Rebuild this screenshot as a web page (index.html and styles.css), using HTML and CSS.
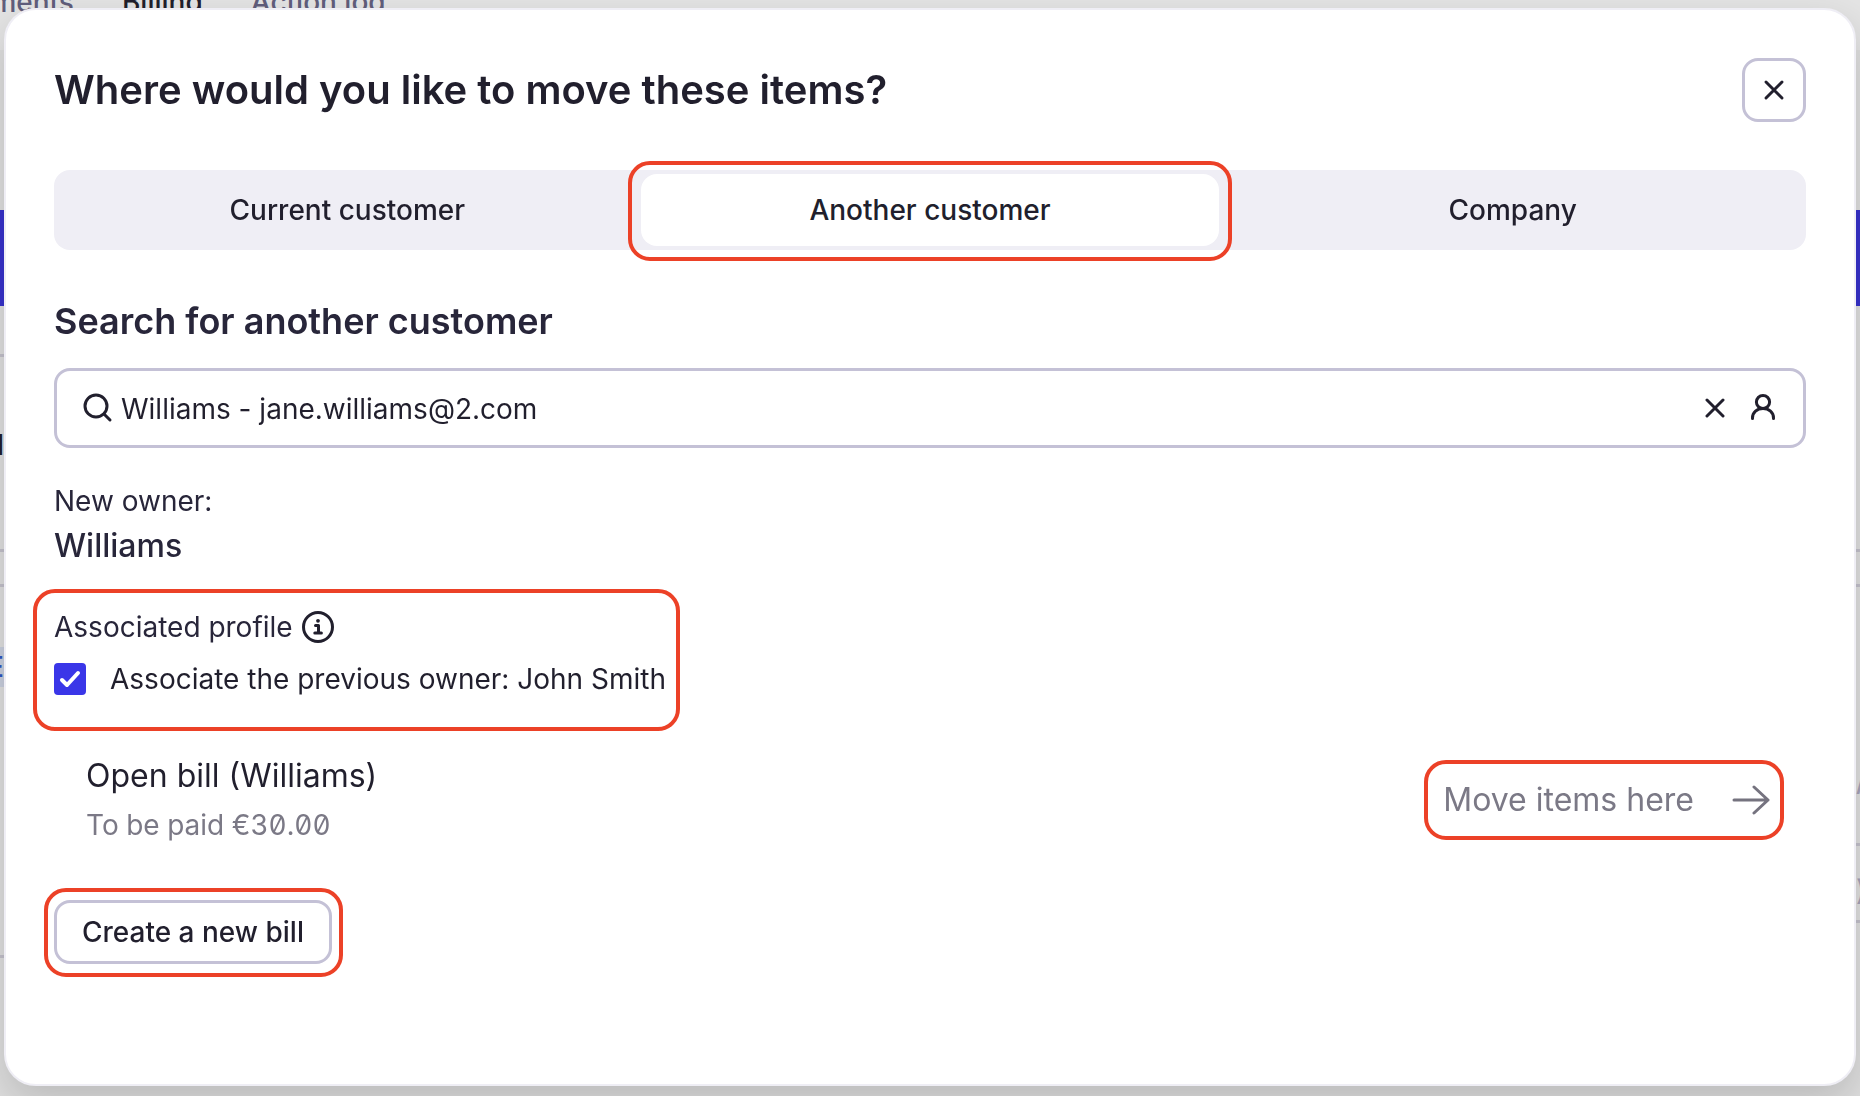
FILE: index.html
```html
<!DOCTYPE html>
<html lang="en">
<head>
<meta charset="utf-8">
<title>Move items</title>
<link rel="stylesheet" href="styles.css">
</head>
<body>
<div class="page" aria-hidden="true">
  <nav class="page-nav">
    <span>Payments</span>
    <span class="current">Billing</span>
    <span>Action log</span>
  </nav>
  <div class="page-gap"></div>
  <div class="page-bar"></div>
  <div class="page-body">
    <div class="page-column">
      <div class="page-row row-intro"></div>
      <div class="page-row row-name"><span>Paid</span></div>
      <div class="page-row row-thin"></div>
      <div class="page-row row-link"><span>E</span></div>
    </div>
    <div class="page-column">
      <div class="page-row row-top"></div>
      <div class="page-row row-thin"></div>
      <div class="page-row row-muted"><span>/</span></div>
      <div class="page-row row-short"><span>)</span></div>
    </div>
  </div>
</div>

<main class="dialog" role="dialog" aria-labelledby="dialog-title">
  <header class="dialog-header">
    <h1 id="dialog-title">Where would you like to move these items?</h1>
    <button class="close" type="button" aria-label="Close">
      <svg class="icon" viewBox="0 0 32 32"><path d="M8 8l16 16M24 8L8 24"/></svg>
    </button>
  </header>

  <div class="tabs" role="tablist">
    <button class="tab" type="button" role="tab">Current customer</button>
    <button class="tab active marked" type="button" role="tab" aria-selected="true">Another customer</button>
    <button class="tab" type="button" role="tab">Company</button>
  </div>

  <h2><label for="customer">Search for another customer</label></h2>
  <div class="search">
    <svg class="icon" viewBox="0 0 32 32"><circle cx="15" cy="14" r="11"/><path d="M23 22l6 6"/></svg>
    <input id="customer" type="text" value="Williams - jane.williams@2.com">
    <button class="plain" type="button" aria-label="Clear">
      <svg class="icon" viewBox="0 0 32 32"><path d="M8 8l16 16M24 8L8 24"/></svg>
    </button>
    <svg class="icon" viewBox="0 0 32 32"><circle cx="16" cy="10" r="6.6"/><path d="M5.500 26.500v-.5c0-5.500 4.500-9.400 10.500-9.400s10.500 3.900 10.500 9.400v.5"/></svg>
  </div>

  <section class="owner">
    <p>New owner:</p>
    <p class="owner-name">Williams</p>
  </section>

  <section class="profile marked">
    <p class="profile-title">Associated profile
      <svg class="icon" viewBox="0 0 32 32"><circle cx="16" cy="16" r="14.500"/><path d="M13.500 14.500h3v7M12.800 22h6.600"/><circle class="dot" cx="16" cy="9.800" r="1.900"/></svg>
    </p>
    <div class="check">
      <input id="associate" type="checkbox" checked>
      <label for="associate">Associate the previous owner: John Smith</label>
    </div>
  </section>

  <section class="bill">
    <div>
      <p class="bill-name">Open bill (Williams)</p>
      <p class="bill-amount">To be paid €30.00</p>
    </div>
    <button class="move marked" type="button">Move items here
      <svg class="arrow" viewBox="0 0 38 32"><path d="M2 16h34M22 3l14 13-14 13"/></svg>
    </button>
  </section>

  <button class="create marked" type="button">Create a new bill</button>
</main>
</body>
</html>
```
FILE: styles.css
```css
* {
  box-sizing: border-box;
}

body {
  margin: 0;
  height: 100vh;
  overflow: hidden;
  background: #e4e4e4;
  color: #211f2d;
  font: 400 28px/40px Inter, sans-serif;
}

h1, h2, p {
  margin: 0;
}

button {
  margin: 0;
  border: 0;
  background: none;
  color: inherit;
  font: inherit;
}

.icon, .arrow {
  flex: none;
  width: 32px;
  height: 32px;
  fill: none;
  stroke: #211f2d;
  stroke-width: 3;
  stroke-linecap: round;
  stroke-linejoin: round;
}

/* Page behind the dialog */
.page {
  display: flex;
  flex-direction: column;
  min-height: 100vh;
}

.page-nav {
  display: flex;
  justify-content: flex-start;
  gap: 48px;
  height: 50px;
  margin-left: -58px;
  color: #615e7c;
  font-weight: 500;
  line-height: 4px;
}

.page-nav .current {
  color: #211f2d;
}

.page-gap {
  height: 160px;
  background: #dedede;
}

.page-bar {
  height: 96px;
  background: #3731cb;
}

.page-body {
  display: flex;
  flex: 1;
  justify-content: space-between;
  background: #dedede;
}

.page-column {
  width: 4px;
}

.page-row {
  display: flex;
  align-items: flex-start;
  justify-content: flex-end;
  overflow: hidden;
  border-bottom: 3px solid #c2c0ca;
  font-weight: 500;
}

.row-intro { height: 51px; }
.row-name { height: 195px; }
.row-top { height: 246px; }
.row-thin { height: 35px; }
.row-link { height: 371px; }
.row-muted { height: 259px; }
.row-short { height: 77px; }

.row-name {
  padding-top: 68px;
}

.row-link {
  padding-top: 60px;
}

.row-link span {
  background: #c8cedd;
  color: #2d55c4;
}

.row-muted, .row-short {
  justify-content: flex-start;
  color: #a5a2b8;
}

.row-muted {
  padding-top: 174px;
}

.row-short {
  padding-top: 24px;
}

/* Dialog */
.dialog {
  position: fixed;
  inset: 8px 4px 10px;
  padding: 48px;
  border: 2px solid #efeef5;
  border-radius: 32px;
  background: #fff;
  box-shadow: 0 16px 40px rgba(0, 0, 0, 0.16);
}

.dialog-header {
  display: flex;
  align-items: center;
  justify-content: space-between;
  margin-bottom: 48px;
}

h1 {
  font-size: 40px;
  font-weight: 600;
  line-height: 48px;
}

.close {
  display: flex;
  align-items: center;
  justify-content: center;
  width: 64px;
  height: 64px;
  padding: 0;
  border: 3px solid #c4c1d6;
  border-radius: 16px;
}

.tabs {
  display: grid;
  grid-template-columns: repeat(3, 1fr);
  gap: 4px;
  padding: 4px;
  margin-bottom: 47px;
  border-radius: 16px;
  background: #efeef5;
}

.tab {
  height: 72px;
  padding: 0;
  border-radius: 16px;
  font-weight: 500;
}

.tab.active {
  background: #fff;
}

h2 {
  margin-bottom: 23px;
  color: #28263a;
  font-size: 36px;
  font-weight: 600;
  line-height: 48px;
}

.search {
  display: flex;
  align-items: center;
  gap: 16px;
  height: 80px;
  padding: 0 24px;
  margin-bottom: 33px;
  border: 3px solid #c4c1d6;
  border-radius: 16px;
}

.search input {
  flex: 1;
  min-width: 0;
  padding: 2px 0 0;
  margin-left: -8px;
  border: 0;
  outline: 0;
  background: none;
  color: inherit;
  font: inherit;
}

.plain {
  display: flex;
  padding: 0;
}

.owner {
  margin-bottom: 36px;
  color: #28263a;
}

.owner-name {
  font-size: 32px;
  font-weight: 500;
  line-height: 50px;
}

.profile {
  width: fit-content;
  margin-bottom: 48px;
}

.profile-title {
  display: flex;
  align-items: center;
  gap: 9px;
  margin-bottom: 12px;
  color: #28263a;
}

.dot {
  fill: #211f2d;
  stroke: none;
}

.check {
  display: flex;
  align-items: center;
  gap: 24px;
}

.check input {
  appearance: none;
  width: 32px;
  height: 32px;
  margin: 0;
  border-radius: 4px;
  background: #3a36e8 url("data:image/svg+xml,%3Csvg xmlns='http://www.w3.org/2000/svg' viewBox='0 0 32 32'%3E%3Cpath d='M8 17l5 5L24 10' fill='none' stroke='white' stroke-width='4' stroke-linecap='round' stroke-linejoin='round'/%3E%3C/svg%3E");
}

.bill {
  display: flex;
  align-items: flex-end;
  justify-content: space-between;
  padding: 0 36px 0 32px;
  margin-bottom: 55px;
}

.bill-name {
  font-size: 32px;
  line-height: 58px;
}

.bill-amount {
  color: #7b7986;
  font-feature-settings: "zero", "tnum";
}

.move {
  display: flex;
  align-items: center;
  gap: 38px;
  padding: 0;
  margin-bottom: 25px;
  color: #7b7986;
  font-size: 32px;
}

.arrow {
  width: 38px;
  stroke: #75737f;
}

.create {
  height: 64px;
  padding: 0 25px;
  border: 3px solid #c4c1d6;
  border-radius: 16px;
  font-weight: 500;
}

/* Highlight frames drawn round the marked controls */
.marked {
  position: relative;
}

.marked::after {
  content: "";
  position: absolute;
  inset: -13px -13px -15px;
  border: 4px solid #ec4127;
  border-radius: 22px;
  pointer-events: none;
}

.profile.marked::after {
  inset: -18px -14px -32px -21px;
}

.move.marked::after {
  inset: -20px -14px -20px -19px;
}

.create.marked::after {
  inset: -15px -14px -16px -13px;
}
```
